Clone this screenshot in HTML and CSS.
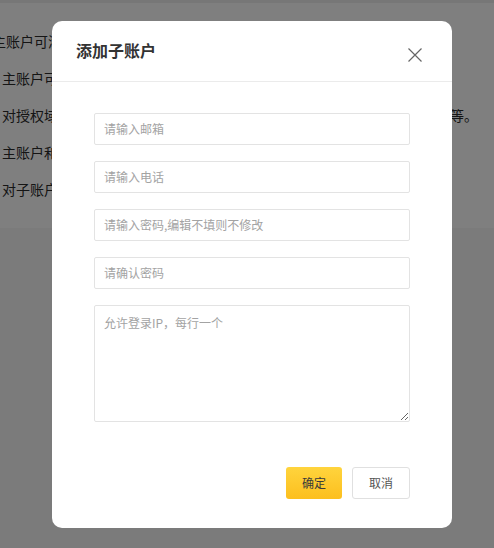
FILE: index.html
```html
<!DOCTYPE html>
<html lang="zh-CN">
<head>
<meta charset="utf-8">
<title>子账户管理</title>
<link rel="stylesheet" href="styles.css">
</head>
<body>
  <div class="topbar"></div>
  <section class="notes">
    <p class="note note-first">主账户可添加多个子账户，并为子账户分配不同的权限。</p>
    <p class="note">主账户可随时修改或删除子账户的登录信息。</p>
    <p class="note">对授权域名拥有完整的管理权限，包括添加、删除、修改解析记录及转发等。</p>
    <p class="note">主账户和子账户的操作记录均可在日志中查询。</p>
    <p class="note">对子账户可设置允许登录的IP地址。</p>
  </section>

  <div class="mask">
    <div class="dialog">
      <div class="dialog-head">
        <h2 class="dialog-title">添加子账户</h2>
        <button class="dialog-close" type="button" aria-label="关闭">
          <svg width="14" height="14" viewBox="0 0 14 14"><path d="M0.5 0.5 L13.5 13.5 M13.5 0.5 L0.5 13.5" stroke="#666" stroke-width="1.2" fill="none"/></svg>
        </button>
      </div>
      <form class="dialog-body">
        <input class="field" type="email" placeholder="请输入邮箱">
        <input class="field" type="tel" placeholder="请输入电话">
        <input class="field" type="password" placeholder="请输入密码,编辑不填则不修改">
        <input class="field" type="password" placeholder="请确认密码">
        <textarea class="field field-area" placeholder="允许登录IP，每行一个"></textarea>
        <div class="dialog-foot">
          <button class="btn btn-primary" type="button">确定</button>
          <button class="btn btn-plain" type="button">取消</button>
        </div>
      </form>
    </div>
  </div>
</body>
</html>
```

FILE: styles.css
```css
* { box-sizing: border-box; }

html, body {
  margin: 0;
  height: 100%;
}

body {
  background: #f6f6f6;
  font-family: "Noto Sans CJK SC", "Noto Sans", sans-serif;
  color: #333;
  overflow: hidden;
}

.topbar {
  height: 3px;
  background: #eeeeee;
}

.notes {
  background: #fff;
  height: 225px;
  padding: 20px 0 0 2px;
  overflow: hidden;
}

.note {
  margin: 0;
  font-size: 14px;
  line-height: 37px;
  color: #2a2a2a;
  white-space: nowrap;
}

.note-first {
  text-indent: -10px;
}

.mask {
  position: fixed;
  inset: 0;
  background: rgba(0, 0, 0, 0.5);
  display: flex;
  align-items: center;
  justify-content: center;
  padding-left: 10px;
}

.dialog {
  width: 400px;
  height: 507px;
  background: #fff;
  border-radius: 10px;
  display: flex;
  flex-direction: column;
}

.dialog-head {
  height: 61px;
  border-bottom: 1px solid #ebebeb;
  display: flex;
  align-items: center;
  justify-content: space-between;
  padding: 0 30px 0 24px;
}

.dialog-title {
  margin: 0 0 1px;
  font-size: 16px;
  font-weight: 700;
  color: #333;
}

.dialog-close {
  border: 0;
  padding: 0;
  margin-top: 8px;
  background: none;
  width: 14px;
  height: 14px;
  display: flex;
  cursor: pointer;
}

.dialog-body {
  display: flex;
  flex-direction: column;
  gap: 16px;
  padding: 31px 42px 0;
}

.field {
  display: block;
  width: 100%;
  height: 32px;
  border: 1px solid #e3e3e3;
  border-radius: 2px;
  padding: 0 9px;
  font-family: inherit;
  font-size: 12px;
  color: #333;
  background: #fff;
  outline: none;
}

.field::placeholder {
  color: #a3a3a3;
}

.field-area {
  height: 117px;
  padding: 8px 9px;
  line-height: 18px;
  resize: vertical;
}

.dialog-foot {
  display: flex;
  justify-content: flex-end;
  gap: 10px;
  margin-top: 29px;
}

.btn {
  height: 32px;
  border-radius: 3px;
  font-family: inherit;
  font-size: 12px;
  padding: 0;
  cursor: pointer;
}

.btn-primary {
  width: 56px;
  border: 0;
  background: linear-gradient(180deg, #ffd43d 0%, #fcbf1e 100%);
  color: #3a3a3a;
}

.btn-plain {
  width: 58px;
  border: 1px solid #e0e0e0;
  background: #fff;
  color: #555;
}
```
